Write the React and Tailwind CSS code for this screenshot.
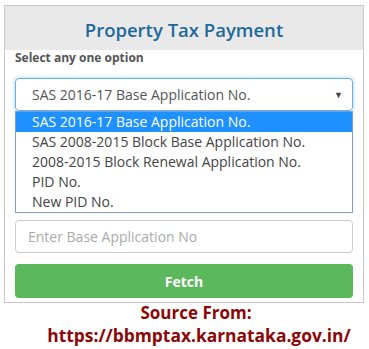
export default function App() {
  const options = [
    "SAS 2016-17 Base Application No.",
    "SAS 2008-2015 Block Base Application No.",
    "2008-2015 Block Renewal Application No.",
    "PID No.",
    "New PID No.",
  ];
  return (
    <div className="w-[369px] h-[349px] bg-white font-['Open_Sans',sans-serif] overflow-hidden pt-[5px] pl-[4px]">
      <div className="w-[360px] border border-[#c8c8c8]">
        <div className="h-[44px] bg-[#e9e9e9] flex items-center justify-center pt-[3px] text-[18.5px] font-semibold text-[#1d6a9c]">
          Property Tax Payment
        </div>
        <div className="px-[10px] pb-[4px]">
          <div className="text-[12px] font-bold text-[#555] leading-[14px] pt-[1px]">Select any one option</div>
          <div className="mt-[13px] h-[33px] rounded-[4px] border border-[#66afe9] shadow-[0_0_4px_rgba(102,175,233,0.6)] flex items-center justify-between pl-[16px] pr-[9px] text-[14px] text-[#555]">
            <span>SAS 2016-17 Base Application No.</span>
            <span className="text-[9px] text-[#444]">▼</span>
          </div>
          <div className="border border-[#7a9cd3] text-[14px] text-[#444]">
            {options.map((o, i) => (
              <div
                key={o}
                className={
                  i === 0
                    ? "h-[20px] leading-[20px] pl-[16px] bg-[#1e90ff] text-white"
                    : "h-[20px] leading-[20px] pl-[16px]"
                }
              >
                {o}
              </div>
            ))}
          </div>
          <div className="mt-[7px] h-[33px] rounded-[4px] border border-[#ccc] flex items-center pl-[12px] text-[14px] text-[#aaa]">
            Enter Base Application No
          </div>
          <div className="mt-[11px] h-[34px] rounded-[4px] bg-[#5cb85c] flex items-center justify-center text-[14px] font-bold text-white">
            Fetch
          </div>
        </div>
      </div>
      <div className="-mt-[1px] pl-[19px] text-center font-bold text-[#8b0606] leading-[22px]">
        <div className="text-[17px]">Source From:</div>
        <div className="text-[17.4px] pl-[6px]">https://bbmptax.karnataka.gov.in/</div>
      </div>
    </div>
  );
}
